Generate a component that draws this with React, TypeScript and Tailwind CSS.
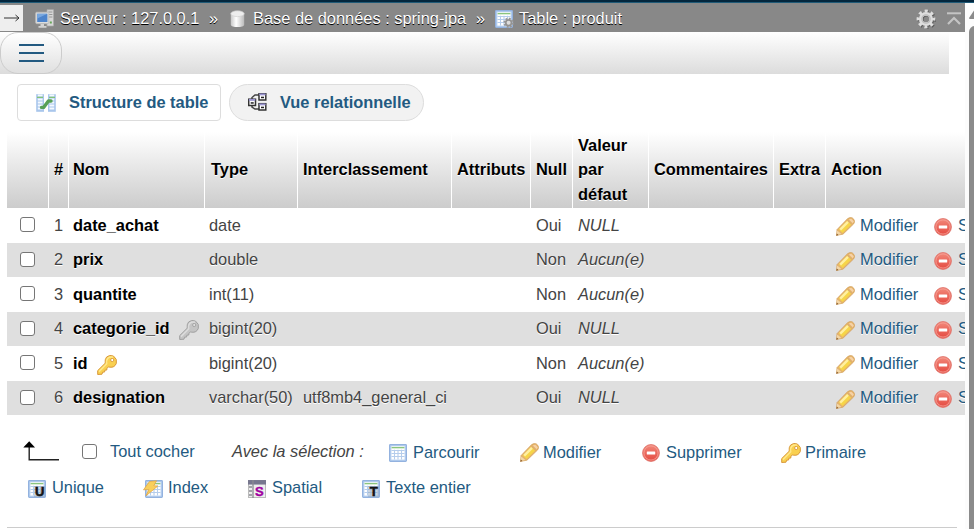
import React from "react";

type IconProps = { className?: string };

function Pencil({ className = "" }: IconProps) {
  return (
    <svg viewBox="0 0 19 19" className={`h-[19px] w-[19px] shrink-0 ${className}`}>
      <path d="M1 12.6 L11.6 1.6 Q14 -.2 16.2 .8 L18 2.6 Q19.4 4.8 17.6 7 L7 17.2 L.5 18.4Z" fill="#e6b46c" stroke="#cf9a54" strokeWidth=".6" />
      <path d="M2.8 12.6 L11.2 3.8 L15.3 7.5 L6.6 16Z" fill="#f6d548" />
      <path d="M4.2 12.6 L12 4.9" stroke="#fff0a0" strokeWidth="2.4" />
      <path d="M11.6 3.2 L15.8 7.4" stroke="#dcae70" strokeWidth="1.2" />
      <path d="M12.8 2.5 L16.8 6.2 L17.8 4.3 L15.3 1.7Z" fill="#f6d2a6" />
      <path d="M1.2 13.6 L5.4 17 L.6 18.2Z" fill="#f3d6a6" />
      <path d="M.2 18.8 L.8 16.5 L2.5 18.1Z" fill="#8a5a2c" />
    </svg>
  );
}

function Drop({ className = "" }: IconProps) {
  return (
    <svg viewBox="0 0 18 18" className={`h-[18px] w-[18px] shrink-0 ${className}`}>
      <defs>
        <linearGradient id="drop-red" x1="0" y1="0" x2="0" y2="1">
          <stop offset="0" stopColor="#f28a7c" />
          <stop offset="1" stopColor="#e4483f" />
        </linearGradient>
      </defs>
      <circle cx="9" cy="9" r="8.4" fill="url(#drop-red)" stroke="#e0776e" strokeWidth=".9" />
      <circle cx="9" cy="9" r="7.1" fill="none" stroke="#f6a59b" strokeWidth=".8" />
      <rect x="4.8" y="7.5" width="8.4" height="3" rx=".6" fill="#fff" />
    </svg>
  );
}

function Key({ className = "", silver = false }: IconProps & { silver?: boolean }) {
  const edge = silver ? "#a0a0a0" : "#d9993c";
  const fill = silver ? "#c4c4c4" : "#f9d050";
  const light = silver ? "#dcdcdc" : "#ffe88a";
  return (
    <svg viewBox="0 0 20 20" className={`h-5 w-5 shrink-0 ${className}`}>
      <path
        d="M9.6 2 Q12.5-.6 16.4 1 Q20.7 4 19.3 8.4 Q17.5 12.8 12.8 12.2 L11.5 12 L9.8 13.4 L9.8 15 L7.8 15.2 L7.6 17 L5.6 17.2 L5 19.2 L.7 19.5 L.7 15.6 L8.2 8.2 Q7.6 4.4 9.6 2Z"
        fill={fill}
        stroke={edge}
        strokeWidth="1"
      />
      <path d="M2 16.6 L9.7 8.8 Q9 4.9 11 3.1 Q13.2 1.3 16 2.3" fill="none" stroke={light} strokeWidth="1.5" />
      <circle cx="15.2" cy="5" r="1.6" fill={silver ? "#dfdfdf" : "#fff"} stroke={edge} strokeWidth=".9" />
    </svg>
  );
}

function TableIcon({ className = "", children }: IconProps & { children?: React.ReactNode }) {
  return (
    <svg viewBox="0 0 18 18" className={`h-[18px] w-[18px] shrink-0 overflow-visible ${className}`}>
      <rect x=".6" y=".6" width="16.8" height="16.8" rx=".8" fill="#b7d0f0" stroke="#93b2df" strokeWidth="1.2" />
      <rect x="2.4" y="2.2" width="13.2" height="13.4" fill="#fff" />
      <path d="M2.6 3.6H15.4" stroke="#8ac57e" strokeWidth="1.4" />
      <path d="M2.5 6.5H15.5M2.5 9.5H15.5M2.5 12.5H15.5M5.5 5.8V15.6M9 5.8V15.6M12.5 5.8V15.6" stroke="#b5cdec" strokeWidth="1.1" />
      {children}
    </svg>
  );
}

function Letter({ children }: { children: string }) {
  return (
    <>
      <rect x="6" y="6" width="11" height="11" fill="#8fa3bd" opacity=".45" />
      <text x="11.7" y="15.8" textAnchor="middle" fontFamily="Liberation Sans, sans-serif" fontWeight="bold" fontSize="13" fill="#151515" stroke="#151515" strokeWidth=".6">
        {children}
      </text>
    </>
  );
}

function Gear({ className = "" }: IconProps) {
  return (
    <svg viewBox="0 0 20 20" className={`h-5 w-5 shrink-0 ${className}`}>
      <g transform="translate(.9 .9)" stroke="#5c5c5c" fill="none">
        <circle cx="10" cy="10" r="5.2" strokeWidth="3.8" />
        <circle cx="10" cy="10" r="8" strokeWidth="2.8" strokeDasharray="3.1 3.18" strokeDashoffset="1.55" />
      </g>
      <g stroke="#dedede" fill="none">
        <circle cx="10" cy="10" r="5.2" strokeWidth="3.8" />
        <circle cx="10" cy="10" r="8" strokeWidth="2.8" strokeDasharray="3.1 3.18" strokeDashoffset="1.55" />
      </g>
      <circle cx="10" cy="10" r="4.2" fill="none" stroke="#bcbcbc" strokeWidth="1.2" />
    </svg>
  );
}

function ServerIcon() {
  return (
    <svg viewBox="0 0 20 20" className="h-5 w-5 shrink-0">
      <path d="M12 .7H18.5V17H12Z" fill="#d7d7d7" stroke="#aaa" strokeWidth=".7" />
      <path d="M13.3 3H17.4M13.3 5.5H17.4M13.3 8H17.4" stroke="#969696" />
      <rect x="14.8" y="12.5" width="2" height="2" fill="#65a657" />
      <rect x=".8" y="3.3" width="13" height="11.3" rx=".8" fill="#ddd" stroke="#bebebe" />
      <rect x="2.2" y="4.8" width="10.2" height="8.2" fill="#4d84cc" />
      <path d="M2.2 4.8H12.4L2.2 9.6Z" fill="#78a7df" />
      <path d="M5.5 15H9V17H11.5V18.8H3.5V17H5.5Z" fill="#d2d2d2" />
    </svg>
  );
}

function DatabaseIcon() {
  return (
    <svg viewBox="0 0 16 18" className="mt-[2px] h-[18px] w-4 shrink-0">
      <defs>
        <linearGradient id="cyl">
          <stop offset="0" stopColor="#c7c7c7" />
          <stop offset=".4" stopColor="#fff" />
          <stop offset="1" stopColor="#bababa" />
        </linearGradient>
      </defs>
      <path d="M.8 3.5V14.4C.8 18 14.2 18 14.2 14.4V3.5Z" fill="url(#cyl)" />
      <ellipse cx="7.5" cy="3.7" rx="6.7" ry="2.9" fill="#ededed" stroke="#d0d0d0" strokeWidth=".7" />
    </svg>
  );
}

function StructureIcon() {
  return (
    <svg viewBox="0 0 20 18" className="h-[18px] w-5 shrink-0">
      <rect x=".2" y=".2" width="7.8" height="17.6" fill="#a9c6ec" />
      <rect x="12" y=".2" width="7.8" height="17.6" fill="#a9c6ec" />
      <path d="M1.8 1.5H6.6M1.8 5.5H6.6M1.8 8.5H6.6M1.8 11.5H6.6M1.8 14.5H6.6M13.4 1.5H18.2M13.4 5.5H18.2M13.4 8.5H18.2M13.4 11.5H18.2M13.4 14.5H18.2" stroke="#f4f9ff" strokeWidth="2" />
      <path d="M1 3.4H7M13 3.4H19" stroke="#83c477" strokeWidth="1.1" />
      <path d="M5.5 13.4H7.6L12.4 7H15" fill="none" stroke="#57a057" strokeWidth="3.4" strokeLinecap="round" strokeLinejoin="round" />
    </svg>
  );
}

const relationBoxes = [[0.7, 6.2], [11, 0.7], [11, 10.7]];

function RelationIcon() {
  return (
    <svg viewBox="0 0 19 18" className="-mt-px h-[18px] w-[19px] shrink-0">
      <path d="M4 6V4.5L7 2H11M4 12V14L7 16H11" fill="none" stroke="#444" strokeWidth="1.5" />
      {relationBoxes.map(([x, y]) => (
        <g key={`${x}-${y}`}>
          <rect x={x} y={y} width="6.8" height="6.3" fill="#fff" stroke="#333" strokeWidth="1.5" />
          <path d={`M${x + 0.2} ${y + 0.7}h6.4`} stroke="#9a94cf" strokeWidth="1.9" />
          <rect x={x + 2} y={y + 3} width="3" height="1.5" fill="#222" />
        </g>
      ))}
    </svg>
  );
}

function Checkbox({ className = "" }: IconProps) {
  return (
    <input
      type="checkbox"
      className={`block h-[15px] w-[15px] shrink-0 appearance-none rounded-[3px] border-[1.3px] border-[#767676] bg-white ${className}`}
    />
  );
}

const grid =
  "grid w-[958px] grid-cols-[42px_20px_136px_93px_154px_79px_42px_76px_125px_52px_1fr] overflow-hidden";

const heads = [
  { label: "", pad: "border-r" },
  { label: "#", pad: "pl-[5px] border-r" },
  { label: "Nom", pad: "pl-[4px] border-r" },
  { label: "Type", pad: "pl-[6px] border-r" },
  { label: "Interclassement", pad: "pl-[5px] border-r" },
  { label: "Attributs", pad: "pl-[5px] border-r" },
  { label: "Null", pad: "pl-[5px] border-r" },
  { label: "Valeur par défaut", pad: "pl-[5px] pr-3 border-r" },
  { label: "Commentaires", pad: "pl-[5px] border-r" },
  { label: "Extra", pad: "pl-[5px] border-r" },
  { label: "Action", pad: "pl-[5px]" },
];

const rows = [
  { name: "date_achat", type: "date", coll: "", nul: "Oui", def: "NULL", key: "" },
  { name: "prix", type: "double", coll: "", nul: "Non", def: "Aucun(e)", key: "" },
  { name: "quantite", type: "int(11)", coll: "", nul: "Non", def: "Aucun(e)", key: "" },
  { name: "categorie_id", type: "bigint(20)", coll: "", nul: "Oui", def: "NULL", key: "silver" },
  { name: "id", type: "bigint(20)", coll: "", nul: "Non", def: "Aucun(e)", key: "gold" },
  { name: "designation", type: "varchar(50)", coll: "utf8mb4_general_ci", nul: "Oui", def: "NULL", key: "" },
];

function Breadcrumbs() {
  return (
    <nav className="flex h-[29px] items-center whitespace-nowrap bg-[#888] text-white [text-shadow:0_1px_0_#000]">
      <div className="flex h-[26px] w-[23px] items-center justify-center bg-[#eee]">
        <svg viewBox="0 0 16 8" className="h-2 w-4">
          <path d="M0 4H15M11.5 1L15 4L11.5 7" fill="none" stroke="#333" strokeWidth="1" />
        </svg>
      </div>
      <div className="ml-3 mt-[2px] w-[25px]"><ServerIcon /></div>
      <span className="w-[149px]">Serveur : 127.0.0.1</span>
      <span className="w-[21px]">»</span>
      <DatabaseIcon />
      <span className="ml-[7px] w-[223px]">Base de données : spring-jpa</span>
      <span className="w-[19px]">»</span>
      <TableIcon className="mt-[3px]">
        <circle cx="13.6" cy="12.8" r="4" fill="#c8c8c8" stroke="#999" strokeWidth="2.4" strokeDasharray="1.7 1.4" />
        <circle cx="13.6" cy="12.8" r="2.8" fill="#ddd" stroke="#929292" strokeWidth="1.6" />
      </TableIcon>
      <span className="ml-[6px]">Table : produit</span>
      <Gear className="ml-auto mt-[2px]" />
      <svg viewBox="0 0 14 13" className="ml-[11px] mr-[4px] mt-[2px] h-[13px] w-[14px]">
        <path d="M0 1.3H14" stroke="#c4c4c4" strokeWidth="2" />
        <path d="M1 12L7 6L13 12" fill="none" stroke="#c4c4c4" strokeWidth="2.2" />
      </svg>
    </nav>
  );
}

export default function App() {
  return (
    <div className="flex h-[529px] w-[974px] flex-col overflow-hidden bg-white font-['Liberation_Sans',Arial,sans-serif] text-[16.4px] leading-6 text-[#444]">
      <div className="h-[3px] shrink-0 border-b border-[#1f5a77] bg-[#03263d]" />
      <div className="flex min-h-0 flex-1">
        <main className="w-[965px] shrink-0 overflow-hidden">
          <Breadcrumbs />
          <div className="h-[42px] w-[949px] bg-linear-to-b from-white to-[#dcdcdc]">
            <button className="flex h-[42px] w-[62px] items-center justify-center rounded-[18px] border border-[#ccc] bg-linear-to-b from-white to-[#e0e0e0]">
              <span className="flex h-[18px] w-[25px] flex-col justify-between">
                <i className="h-[2px] bg-[#235a81]" />
                <i className="h-[2px] bg-[#235a81]" />
                <i className="h-[2px] bg-[#235a81]" />
              </span>
            </button>
          </div>
          <div className="ml-[17px] mt-[10px] flex gap-2 font-bold text-[#235a81]">
            <div className="flex h-[37px] w-[204px] items-center rounded-[4px] border border-[#ddd] bg-white pl-[18px]">
              <StructureIcon />
              <span className="mb-[2px] ml-[13px] whitespace-nowrap">Structure de table</span>
            </div>
            <div className="flex h-[37px] w-[195px] items-center rounded-[19px] border border-[#ddd] bg-[#f2f2f2] pl-[18px]">
              <RelationIcon />
              <span className="mb-[2px] ml-[13px] whitespace-nowrap">Vue relationnelle</span>
            </div>
          </div>

          <div className="ml-[7px] mt-[11px]">
            <div className={`${grid} h-[76px] font-bold leading-[24.6px] text-black [text-shadow:0_1px_0_#fff]`}>
              {heads.map((h) => (
                <div key={h.label} className={`flex items-center border-white bg-linear-to-b from-white to-[#ccc] pb-px ${h.pad}`}>
                  {h.label}
                </div>
              ))}
            </div>
            {rows.map((r, i) => (
              <div
                key={r.name}
                className={`${grid} items-center whitespace-nowrap ${i % 2 ? "h-[34px] bg-[#dfdfdf] pb-[2px] [text-shadow:0_1px_0_#fff]" : "h-[35px] bg-white pb-[2px]"}`}
              >
                <div className="pl-[13px]"><Checkbox className={i % 2 ? "mt-px" : ""} /></div>
                <div className="pl-[5px]">{i + 1}</div>
                <div className="flex items-center pl-[4px] font-bold text-black">
                  {r.name}
                  {r.key && <Key silver={r.key === "silver"} className="ml-[9px] mt-[4px]" />}
                </div>
                <div className="pl-[4px]">{r.type}</div>
                <div className="pl-[5px]">{r.coll}</div>
                <div />
                <div className="pl-[5px]">{r.nul}</div>
                <div className="pl-[5px] italic">{r.def}</div>
                <div />
                <div />
                <div className="flex min-w-0 items-center overflow-hidden pl-[10px] text-[#235a81]">
                  <Pencil className="mt-[4px]" />
                  <span className="ml-[5px] w-[74px] shrink-0">Modifier</span>
                  <Drop className="mt-[4px]" />
                  <span className="ml-[6px]">Supprimer</span>
                </div>
              </div>
            ))}
          </div>

          <div className="mt-[24px] flex h-6 items-center whitespace-nowrap text-[#235a81]">
            <svg viewBox="0 0 37 20" className="ml-[23px] h-5 w-[37px]">
              <path d="M6.2 4V18.7H36" fill="none" stroke="#222" strokeWidth="1.4" />
              <path d="M.3 6.5L6.2 .3L12 6.5Z" fill="#000" />
            </svg>
            <div className="ml-[22px] flex w-[28px]"><Checkbox /></div>
            <span className="w-[122px]">Tout cocher</span>
            <i className="w-[157px] text-[#444]">Avec la sélection :</i>
            <TableIcon className="mt-[3px]" />
            <span className="ml-[6px] mt-px w-[107px]">Parcourir</span>
            <Pencil className="mt-[3px]" />
            <span className="ml-[4px] mt-px w-[99px]">Modifier</span>
            <Drop className="mt-[3px]" />
            <span className="ml-[6px] mt-px w-[115px]">Supprimer</span>
            <Key className="mt-[3px]" />
            <span className="ml-[4px] mt-px">Primaire</span>
          </div>
          <div className="ml-[28px] mt-[12px] flex h-6 items-center whitespace-nowrap text-[#235a81]">
            <TableIcon className="mt-[3px]"><Letter>U</Letter></TableIcon>
            <span className="ml-[6px] w-[93px]">Unique</span>
            <TableIcon className="mt-[3px]">
              <path d="M4.5 1.5L11.5 .8L8.8 5.8L12.8 6L1 15.8L3.8 9.6L-1.5 9.8Z" fill="#f8cf5c" stroke="#e3a745" strokeWidth=".8" />
            </TableIcon>
            <span className="ml-[5px] w-[80px]">Index</span>
            <svg viewBox="0 0 18 18" className="mt-[3px] h-[18px] w-[18px] shrink-0">
              <rect x=".5" y=".5" width="17" height="17" fill="#eee" stroke="#bbb" />
              <path d="M0 2.3H18" stroke="#77778e" strokeWidth="4.5" />
              <path d="M5 0V18M1 7H4M1 11H4M1 15H4" stroke="#8a8a92" strokeWidth="1.3" />
              <text x="11.3" y="15.8" textAnchor="middle" fontFamily="Liberation Sans, sans-serif" fontSize="13" fontWeight="bold" fill="#a000a0" stroke="#a000a0" strokeWidth=".4">S</text>
            </svg>
            <span className="ml-[6px] w-[90px]">Spatial</span>
            <TableIcon className="mt-[3px]"><Letter>T</Letter></TableIcon>
            <span className="ml-[6px]">Texte entier</span>
          </div>
          <div className="ml-[7px] mt-[28px] h-px w-[950px] bg-[#ccc]" />
        </main>
        <aside className="flex w-[9px] shrink-0 flex-col overflow-hidden bg-[#fcfcfc] pl-[4px]">
          <svg viewBox="0 0 12 9" className="mt-[7px] h-[9px] w-3 shrink-0">
            <path d="M0 8L5 .5H7L12 8Q12 9 11 9H1Q0 9 0 8Z" fill="#8b8b8b" />
          </svg>
          <div className="mt-[7px] w-3 flex-1 shrink-0 rounded-t-[6px] bg-[#8b8b8b]" />
        </aside>
      </div>
    </div>
  );
}
